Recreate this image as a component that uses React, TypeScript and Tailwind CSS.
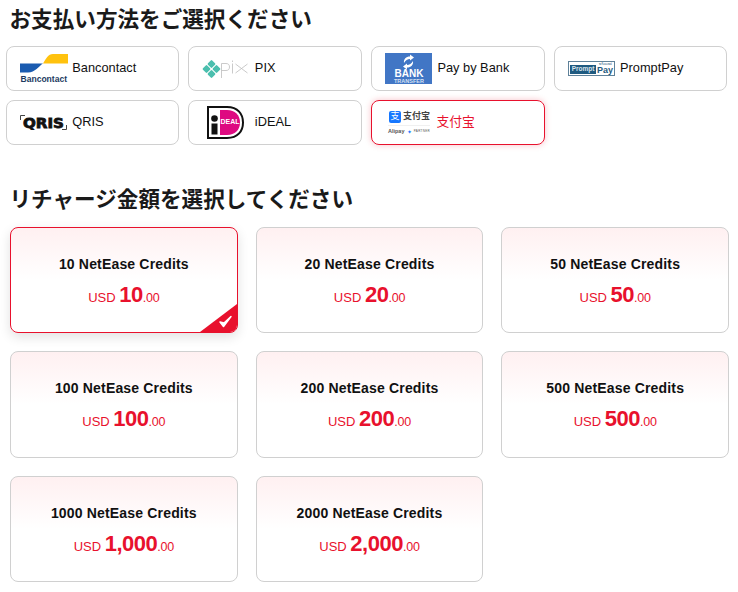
import React from 'react';

const BancontactLogo = () => (
  <svg width="48" height="30" viewBox="0 0 48 30">
    <path d="M0 9.500H23C19 12 15 18.500 8 18.500H0z" fill="#1a5bb0" />
    <path d="M48 0H33C28 0 26 5 23 9.500H48z" fill="#ffc20e" />
    <text x="0.500" y="28" fontSize="9.500" fontWeight="700" fill="#1d3a5f" fontFamily="'Liberation Sans', sans-serif" textLength="46.500" lengthAdjust="spacingAndGlyphs">Bancontact</text>
  </svg>
);

const PixLogo = () => (
  <svg width="48" height="22" viewBox="0 0 48 22">
    <g fill="#4bbfae">
      <rect x="6.500" y="3" width="6" height="6" rx="1" transform="rotate(45 9.500 6)" />
      <rect x="1.500" y="8" width="6" height="6" rx="1" transform="rotate(45 4.500 11)" />
      <rect x="11.500" y="8" width="6" height="6" rx="1" transform="rotate(45 14.500 11)" />
      <rect x="6.500" y="13" width="6" height="6" rx="1" transform="rotate(45 9.500 16)" />
    </g>
    <g fill="none" stroke="#bcbcbc" strokeWidth="0.800">
      <path d="M19.500 20V5.500h4.500c2.500 0 3.500 1.500 3.500 3.500s-1 3.500-3.500 3.500h-4.500" />
      <path d="M30.500 5.500v10M30.500 2.500v1.500" />
      <path d="M33.500 6l12 9M45.500 6l-12 9" />
    </g>
  </svg>
);

const BankLogo = () => (
  <div className="flex h-[31px] w-[47px] flex-col items-center bg-[#4176c5] text-white">
    <svg width="15" height="17" viewBox="0 0 14 16" className="mt-[1px]">
      <path d="M2.500 9c-.5-4 2-6.500 6-6.500V.5l4 3-4 3V5C6 5 4 6.500 2.500 9z" fill="#fff" />
      <path d="M11.500 7c.5 4-2 6.500-6 6.500v2l-4-3 4-3V11c2.500 0 4.500-1.500 6-4z" fill="#fff" />
    </svg>
    <span className="text-[10px] leading-[8px] font-bold">BANK</span>
    <span className="mt-[1px] text-[5.500px] leading-[5px] font-bold text-[#d5e0f2]">TRANSFER</span>
  </div>
);

const PromptPayLogo = () => (
  <div className="flex h-[15px] w-[47px] items-end border border-[#5f8199] bg-white p-[1px]">
    <span className="flex h-[9px] w-[28px] items-center justify-center bg-[#1f5a80] text-[6.500px] leading-none font-bold text-[#d8e4ec]">Prompt</span>
    <span className="ml-[1px] flex flex-col items-center text-[#1f5a80]">
      <span className="text-[3px] leading-[3px]">พร้อมเพย์</span>
      <span className="text-[9px] leading-[8px] font-bold">Pay</span>
    </span>
  </div>
);

const QrisLogo = () => (
  <svg width="47" height="15" viewBox="0 0 47 15">
    <path d="M5 .5H.5V5M42 14.500h4.500V10" fill="none" stroke="#444" strokeWidth="1" />
    <text x="3" y="12.500" fontSize="14" fontWeight="700" fill="#111" stroke="#111" strokeWidth="0.800" fontFamily="'DejaVu Sans', sans-serif" textLength="41" lengthAdjust="spacingAndGlyphs">QRIS</text>
  </svg>
);

const IdealLogo = () => (
  <svg width="38" height="33" viewBox="0 0 38 33">
    <path d="M1 1h19c11 0 16 7 16 15.500S31 32 20 32H1z" fill="#fff" stroke="#111" strokeWidth="2" />
    <path d="M13 4h7c8 0 13 5 13 12.500S28 29 20 29h-7z" fill="#de0a81" />
    <circle cx="7.500" cy="12.500" r="3.300" fill="#111" />
    <rect x="4.500" y="17.500" width="6" height="11" fill="#111" />
    <text x="13.500" y="17.500" fontSize="8" fontWeight="700" fill="#fff" fontFamily="'Liberation Sans', sans-serif" textLength="19" lengthAdjust="spacingAndGlyphs">DEAL</text>
  </svg>
);

const AlipayLogo = () => (
  <div className="flex w-[42px] flex-col items-center">
    <div className="flex items-center gap-[1px] self-start pl-[1px]">
      <span className="flex h-[12px] w-[12px] items-center justify-center rounded-[2px] bg-[#1677ff] text-[9px] leading-none text-white">支</span>
      <span className="ml-[1px] text-[9px] leading-none font-bold text-[#444]">支付宝</span>
    </div>
    <div className="mt-[2px] h-px w-full bg-[#f0f0f0]" />
    <div className="mt-[3px] flex w-full items-center justify-between text-[#555]">
      <span className="text-[5.500px] leading-none font-bold">Alipay</span>
      <span className="text-[6px] leading-none text-[#1677ff]">✦</span>
      <span className="text-[3px] leading-none tracking-[0.300px]">PARTNER</span>
    </div>
  </div>
);

const methods = [
  { name: 'Bancontact', logo: <BancontactLogo /> },
  { name: 'PIX', logo: <PixLogo /> },
  { name: 'Pay by Bank', logo: <BankLogo /> },
  { name: 'PromptPay', logo: <PromptPayLogo /> },
  { name: 'QRIS', logo: <QrisLogo /> },
  { name: 'iDEAL', logo: <IdealLogo /> },
  { name: '支付宝', logo: <AlipayLogo />, selected: true },
];

const credits = [
  { name: '10 NetEase Credits', price: '10', selected: true },
  { name: '20 NetEase Credits', price: '20' },
  { name: '50 NetEase Credits', price: '50' },
  { name: '100 NetEase Credits', price: '100' },
  { name: '200 NetEase Credits', price: '200' },
  { name: '500 NetEase Credits', price: '500' },
  { name: '1000 NetEase Credits', price: '1,000' },
  { name: '2000 NetEase Credits', price: '2,000' },
];

const App: React.FC = () => {
  return (
    <div className="h-[592px] w-[738px] overflow-hidden bg-white font-['Liberation_Sans','Noto_Sans_CJK_JP',sans-serif]">
      <h2 className="h-[46px] pt-[6px] pl-[9.500px] text-[21.600px] leading-[28px] font-bold text-[#1a1a1a]">お支払い方法をご選択ください</h2>

      <div className="ml-[5.800px] grid w-[721.300px] grid-cols-4 gap-[9px]">
        {methods.map((m) => (
          <div
            key={m.name}
            className={`flex h-[45px] items-center gap-[4.500px] rounded-[8px] border pl-[13px] text-[12.800px] ${
              m.selected ? 'border-[#e8112d] text-[#e8112d] shadow-[0_0_6px_rgba(232,17,45,0.25)]' : 'border-[#d0d0d0] text-[#111]'
            }`}
          >
            <div className="flex w-[48px] shrink-0 items-center justify-center">{m.logo}</div>
            <span className={`-mt-[2px] ${m.selected ? '-ml-[1px]' : ''}`}>{m.name}</span>
          </div>
        ))}
      </div>

      <h2 className="mt-[41px] h-[28px] pl-[9.500px] text-[21.600px] leading-[28px] font-bold text-[#1a1a1a]">リチャージ金額を選択してください</h2>

      <div className="mt-[13px] ml-[10px] grid w-[719px] grid-cols-3 gap-x-[18px] gap-y-[18px]">
        {credits.map((c) => (
          <div
            key={c.name}
            className={`relative flex h-[106.400px] flex-col items-center overflow-hidden rounded-[8px] border bg-gradient-to-b from-[#fff0f1] to-white to-50% pt-[27px] ${
              c.selected ? 'border-[#e8112d] shadow-[0_4px_12px_rgba(0,0,0,0.12)]' : 'border-[#d0d0d0]'
            }`}
          >
            <div className="text-[14px] leading-[18px] font-bold tracking-[0.170px] text-[#111]">{c.name}</div>
            <div className="mt-[8px] leading-[28px] text-[#e8112d]">
              <span className="text-[13px]">USD </span>
              <span className="text-[22px] font-bold tracking-[-0.500px]">{c.price}</span>
              <span className="text-[12.500px] tracking-[-0.200px]">.00</span>
            </div>
            {c.selected && (
              <svg width="37" height="28" viewBox="0 0 37 28" className="absolute right-0 bottom-0">
                <path d="M37 0V28H0z" fill="#e8112d" />
                <path d="M20 18l3.500 4.500L31 12.500l-7 6.500z" fill="#fff" stroke="#fff" strokeWidth="1.500" strokeLinejoin="round" />
              </svg>
            )}
          </div>
        ))}
      </div>
    </div>
  );
};

export default App;
